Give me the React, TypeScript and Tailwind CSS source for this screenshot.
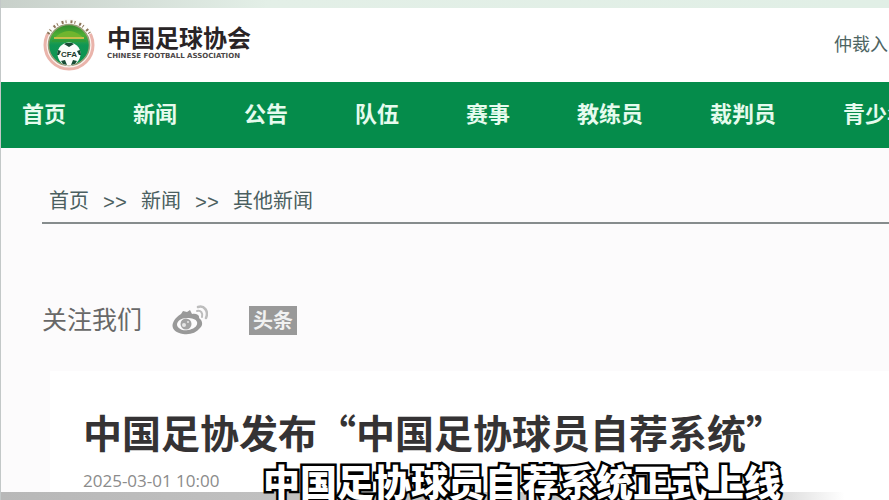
import { Fragment } from 'react'

const navItems = ['首页', '新闻', '公告', '队伍', '赛事', '教练员', '裁判员', '青少年']
const crumbs = ['首页', '新闻', '其他新闻']

function CrestLogo() {
  return (
    <svg className="h-14 w-14 shrink-0" viewBox="0 0 56 56" aria-hidden="true">
      <defs>
        <linearGradient id="crest" x1="0" y1="0" x2="0" y2="1">
          <stop offset="0" stopColor="#2f8a2c" />
          <stop offset="0.25" stopColor="#4fae35" />
          <stop offset="0.5" stopColor="#109654" />
          <stop offset="1" stopColor="#0b9350" />
        </linearGradient>
      </defs>
      <circle cx="28" cy="28" r="24" fill="#fbf3ef" stroke="#eab4ab" strokeWidth="3" />
      <path d="M7 17A24 24 0 0 1 49 17" fill="none" stroke="#fdfdfb" strokeWidth="5" />
      <path d="M7 17A24 24 0 0 1 49 17" fill="none" stroke="#8d7458" strokeWidth="3" strokeDasharray="2 2 1 4" />
      <circle cx="28" cy="28" r="20.5" fill="url(#crest)" stroke="#9a9c78" strokeWidth="1.5" />
      <path d="M17 18Q28 10 39 18L43 21H13Z" fill="#71b52e" />
      <path d="M13 21H43" stroke="#c9bd4c" strokeWidth="2" />
      <path d="M11 24H45" stroke="#2c9c3a" strokeWidth="2" />
      <circle cx="28" cy="37" r="11.5" fill="#fbfdfb" />
      <path d="M23 27L28 30L33 27L31 26H25ZM17 33L20 34L18 38L16 38ZM39 33L36 34L38 38L40 38ZM20 44L24 43L26 48L22 47ZM36 44L32 43L30 48L34 47Z" fill="#174b34" />
      <text x="28" y="40" textAnchor="middle" fontFamily="Liberation Sans" fontSize="8" fontWeight="700" fill="#1c3a2c">
        CFA
      </text>
    </svg>
  )
}

function WeiboIcon() {
  return (
    <svg className="h-8 w-9" viewBox="0 0 36 32" fill="none" aria-hidden="true">
      <path
        fillRule="evenodd"
        fill="#999"
        d="M9 10L11 7L15 8L18 6L20 10C24 9 28 11 27 14C31 17 31 21 28 24C24 29 18 31 11 30C3 29-1 24 1 19C3 14 6 12 9 10ZM15 14C9 14 5 17 5 21C6 25 11 27 16 26C22 25 26 22 25 18C24 15 20 14 15 14Z"
      />
      <circle cx="14" cy="20" r="5.5" fill="#a3a3a3" />
      <circle cx="12" cy="21" r="2" fill="#e6e6e6" />
      <circle cx="16" cy="18" r="1" fill="#e6e6e6" />
      <path d="M26 3C32 1 37 7 34 14" stroke="#bdbdbd" strokeWidth="2.5" strokeLinecap="round" />
      <path d="M25 7C29 6 31 9 30 13" stroke="#bdbdbd" strokeWidth="2" strokeLinecap="round" />
    </svg>
  )
}

function Header() {
  return (
    <header className="flex h-[74px] items-center bg-white pl-10">
      <a href="#" className="flex items-center gap-[10px]">
        <CrestLogo />
        <span className="flex flex-col whitespace-nowrap pb-[6px]">
          <span className="text-[24px] font-bold leading-7 text-[#292426]">中国足球协会</span>
          <span className="font-['DejaVu_Sans',sans-serif] text-[7px] font-bold leading-[10px] text-[#4c4748]">
            CHINESE FOOTBALL ASSOCIATION
          </span>
        </span>
      </a>
      <a href="#" className="ml-auto w-[55px] shrink-0 whitespace-nowrap pb-1 text-[18px] leading-6 text-[#4e6462]">
        仲裁入口
      </a>
    </header>
  )
}

function MainNav() {
  return (
    <nav className="flex h-[66px] items-center gap-[67px] bg-[#058c4b] pb-[6px] pl-[21px] text-[22px] font-bold text-[#e6fbee]">
      {navItems.map((item) => (
        <a key={item} href="#" className="shrink-0 whitespace-nowrap">
          {item}
        </a>
      ))}
    </nav>
  )
}

function Breadcrumb() {
  return (
    <nav
      aria-label="breadcrumb"
      className="ml-[41px] flex gap-[14px] border-b-2 border-[#868c8d] pt-[38px] pl-[7px] text-[20px] leading-7 text-[#4b5f60]"
    >
      {crumbs.map((crumb, i) => (
        <Fragment key={crumb}>
          {i > 0 && <span className="font-['Liberation_Mono',monospace] leading-9">&gt;&gt;</span>}
          <a href="#">{crumb}</a>
        </Fragment>
      ))}
    </nav>
  )
}

function FollowUs() {
  return (
    <div className="mt-20 ml-[41px] flex h-8 items-center">
      <span className="pb-1 text-[25px] leading-8 text-[#686868]">关注我们</span>
      <a href="#" aria-label="微博" className="ml-[30px]">
        <WeiboIcon />
      </a>
      <a
        href="#"
        className="ml-[41px] flex h-[29px] w-12 items-center justify-center bg-[#999] text-[20px] font-bold text-[#f1f1f1]"
      >
        头条
      </a>
    </div>
  )
}

export default function App() {
  return (
    <div className="relative overflow-hidden border-l border-[#c3c8c8] bg-[#fcfbfc] font-['Noto_Sans_CJK_SC',sans-serif]">
      <div className="h-2 bg-linear-to-r from-[#c8d0ca] from-0% via-[#e3efe7] via-30% to-[#e1efe6]" />
      <Header />
      <MainNav />
      <main>
        <Breadcrumb />
        <FollowUs />
        <article className="mt-[35px] ml-[49px] bg-white pt-9 pl-[33px]">
          <h1 className="text-[39px] font-bold leading-[48px] whitespace-nowrap text-[#353334]">
            中国足协发布“中国足协球员自荐系统”
          </h1>
          <time
            dateTime="2025-03-01T10:00"
            className="mt-[14px] block font-['Open_Sans',sans-serif] text-[17px] leading-[23px] text-[#8b8b8b]"
          >
            2025-03-01 10:00
          </time>
        </article>
      </main>
      <div className="h-2 bg-linear-to-r from-[#b8b8b8] from-0% via-[#cfcfcf] via-85% to-white to-95%" />
      <p className="absolute top-[455px] left-[262px] text-[37px] font-black leading-[52px] whitespace-nowrap text-white [-webkit-text-stroke:5px_#000] [paint-order:stroke_fill]">
        中国足协球员自荐系统正式上线
      </p>
    </div>
  )
}
